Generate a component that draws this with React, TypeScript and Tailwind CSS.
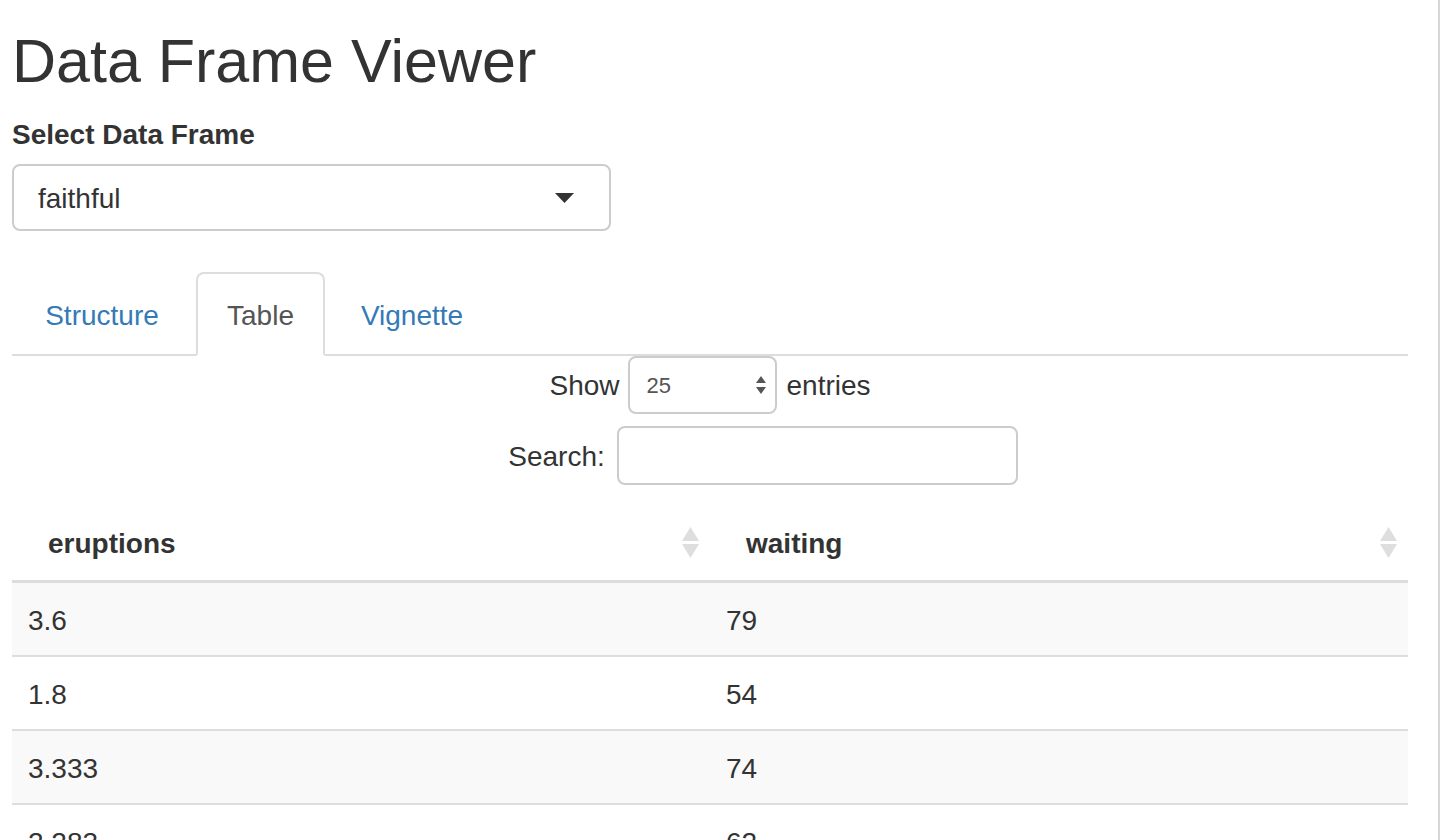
const ROWS: [string, string][] = [
  ['3.6', '79'],
  ['1.8', '54'],
  ['3.333', '74'],
  ['2.283', '62'],
  ['4.533', '85'],
  ['2.883', '55'],
];

const TABS = [
  { label: 'Structure', width: 'w-[180px]', active: false },
  { label: 'Table', width: 'w-[129px]', active: true },
  { label: 'Vignette', width: 'w-[166px]', active: false },
];

function SortIcon() {
  return (
    <svg width="17" height="32" viewBox="0 0 17 32" className="shrink-0">
      <path d="M8.5 0 L17 14 L0 14 Z" fill="#dedede" />
      <path d="M0 17 L17 17 L8.5 31 Z" fill="#dedede" />
    </svg>
  );
}

export default function App() {
  return (
    <div className="h-[840px] w-[1440px] overflow-hidden bg-white text-[#333] font-['Liberation_Sans',Arial,sans-serif]">
      <div className="h-full border-r-2 border-[#d6d6da] pl-[12px] pr-[30px]">
        {/* Title */}
        <h1 className="pt-[28px] text-[61px] leading-[66px] font-normal">Data Frame Viewer</h1>

        {/* Data frame picker */}
        <label className="mt-[25px] block text-[28px] leading-[32px] font-bold">Select Data Frame</label>
        <div className="mt-[13px] flex h-[67px] w-[599px] items-center justify-between rounded-[8px] border-2 border-[#ccc] pl-[24px] pr-[35px] text-[28px]">
          <span className="pt-[3px]">faithful</span>
          <svg width="19" height="10" viewBox="0 0 19 10">
            <path d="M0 0 L19 0 L9.5 10 Z" fill="#333" />
          </svg>
        </div>

        {/* Tabs */}
        <ul className="mt-[41px] flex border-b-2 border-[#ddd]">
          {TABS.map((t) => (
            <li key={t.label} className="-mb-[2px] mr-[4px]">
              <div
                className={`${t.width} flex h-[84px] items-center justify-center rounded-t-[8px] border-2 pt-[4px] text-[28px] leading-[40px] ${
                  t.active
                    ? 'border-[#ddd] border-b-white bg-white text-[#555]'
                    : 'border-transparent text-[#337ab7]'
                }`}
              >
                {t.label}
              </div>
            </li>
          ))}
        </ul>

        {/* Length menu */}
        <div className="flex h-[58px] items-center justify-center text-[28px]">
          <span className="pt-[2px]">Show</span>
          <div className="ml-[8px] flex h-[58px] w-[149px] items-center justify-between rounded-[8px] border-2 border-[#ccc] pl-[17px] pr-[9px]">
            <span className="text-[22px] text-[#555]">25</span>
            <svg width="10" height="20" viewBox="0 0 10 20">
              <path d="M5 1 L10 8 L0 8 Z" fill="#555" />
              <path d="M0 12 L10 12 L5 19 Z" fill="#555" />
            </svg>
          </div>
          <span className="ml-[10px] pt-[2px]">entries</span>
        </div>

        {/* Search */}
        <div className="mt-[12px] flex h-[59px] items-center justify-center pl-[106px] text-[28px]">
          <span className="pt-[2px]">Search:</span>
          <div className="ml-[12px] h-[59px] w-[401px] rounded-[8px] border-2 border-[#ccc]" />
        </div>

        {/* Table */}
        <div className="mt-[17px]">
          <div className="grid h-[81px] grid-cols-2 border-b-[3px] border-[#ddd] text-[28px] font-bold">
            <div className="flex items-center justify-between pl-[36px] pr-[11px] pt-[4px]">
              <span className="pt-[2px]">eruptions</span>
              <SortIcon />
            </div>
            <div className="flex items-center justify-between pl-[36px] pr-[11px] pt-[4px]">
              <span className="pt-[2px]">waiting</span>
              <SortIcon />
            </div>
          </div>
          {ROWS.map(([a, b], i) => (
            <div
              key={i}
              className={`grid h-[74px] grid-cols-2 border-b-2 border-[#ddd] pt-[3px] text-[28px] ${
                i % 2 === 0 ? 'bg-[#f9f9f9]' : 'bg-white'
              }`}
            >
              <div className="flex items-center pl-[16px]">{a}</div>
              <div className="flex items-center pl-[16px]">{b}</div>
            </div>
          ))}
        </div>
      </div>
    </div>
  );
}
